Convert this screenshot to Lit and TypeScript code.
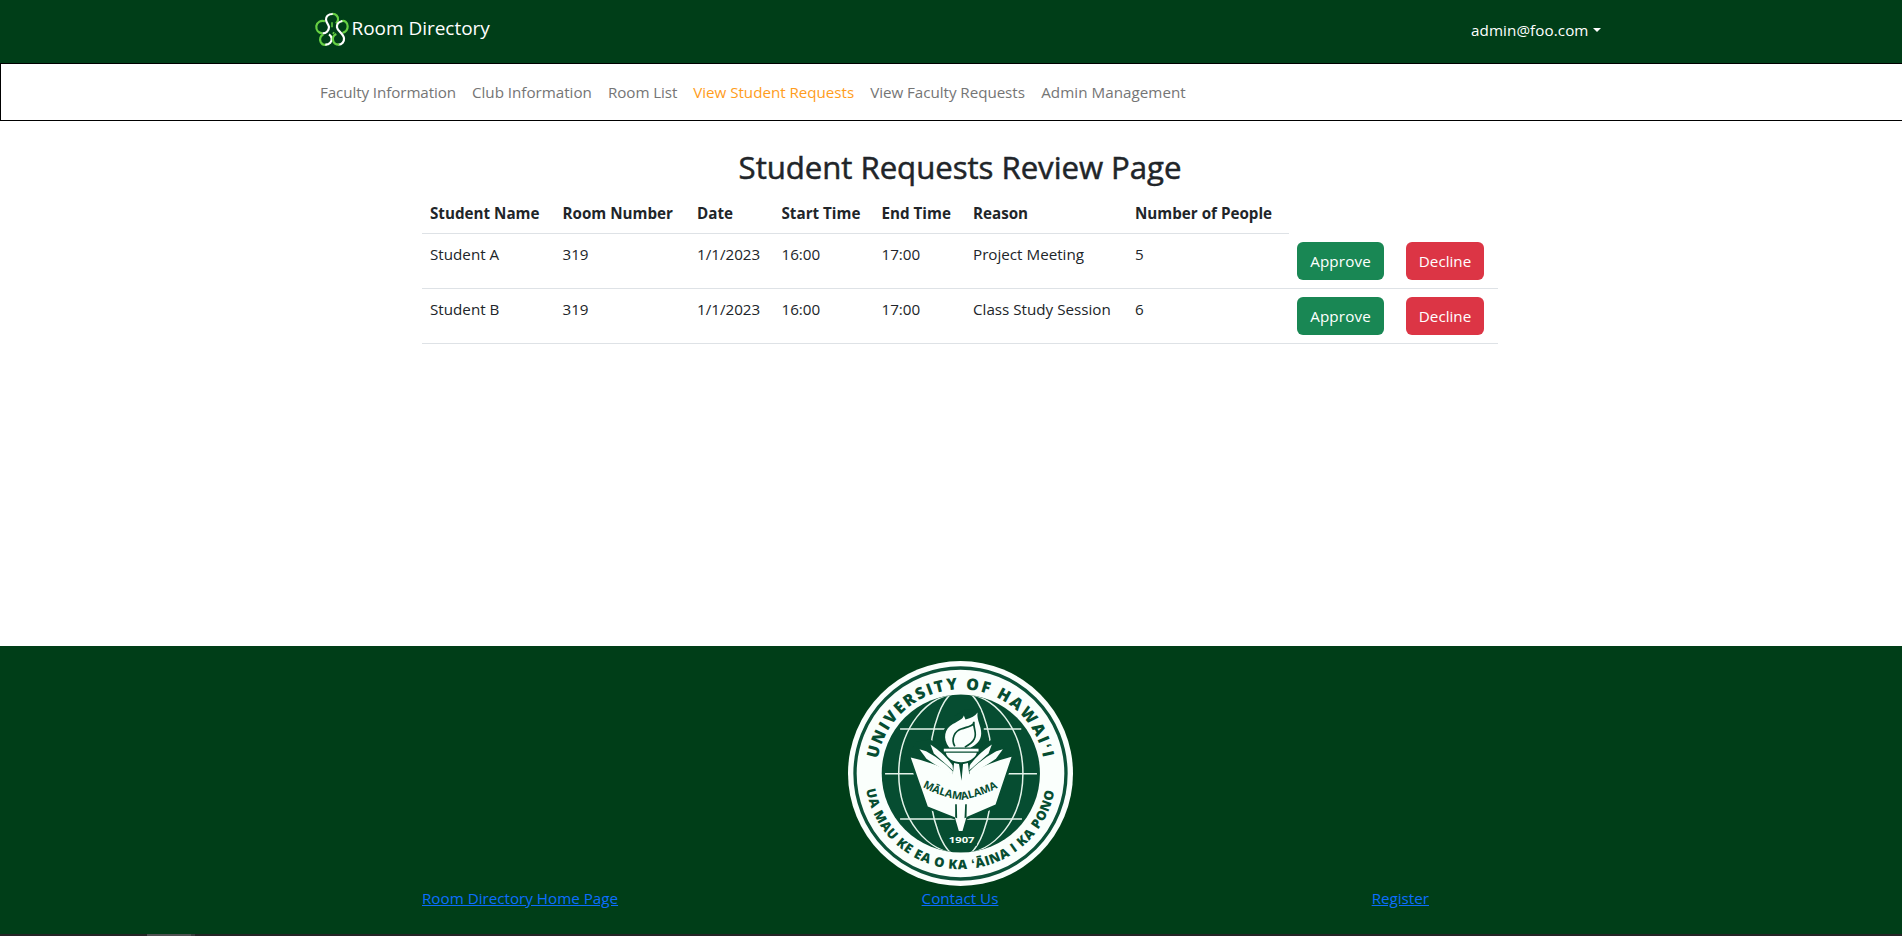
import { LitElement, html, css, svg } from "lit";
import { customElement } from "lit/decorators.js";
import { classMap } from "lit/directives/class-map.js";

const navItems = [
  { label: "Faculty Information", width: 136, spacing: -0.1 },
  { label: "Club Information", width: 120, spacing: -0.02 },
  { label: "Room List", width: 69.2, spacing: -0.09 },
  { label: "View Student Requests", width: 161, spacing: -0.03, active: true },
  { label: "View Faculty Requests", width: 155, spacing: -0.05 },
  { label: "Admin Management", width: 146, spacing: 0.04 },
];

const columns = ["Student Name", "Room Number", "Date", "Start Time", "End Time", "Reason", "Number of People"];

const requests = [
  ["Student A", "319", "1/1/2023", "16:00", "17:00", "Project Meeting", "5"],
  ["Student B", "319", "1/1/2023", "16:00", "17:00", "Class Study Session", "6"],
];

@customElement("clover-logo")
class CloverLogo extends LitElement {
  static styles = css`
    :host { display: block; width: 42px; height: 42px; }
    svg { display: block; fill: none; stroke-width: 6.6; }
    .g { stroke: #66d043; }
    .w { stroke: #fff; }
    .stem { stroke-width: 4.5; }
  `;
  render() {
    return html`<svg width="42" height="42" viewBox="0 0 126 126">
      <path class="g" d="M60 18C72 17 80 26 78 36Q77 42 72 46" />
      <path class="w" d="M62 18C48 18 41 26 42 36C43 44 50 50 51 57C51 68 42 77 31 76" />
      <path class="g" d="M39 40C27 35 15 43 13 54C12 66 19 75 31 76" />
      <path class="g" d="M34 80C25 83 22 93 26 102C30 110 37 112 44 110" />
      <path class="w" d="M40 110C53 110 60 101 59 91Q58 84 51 79" />
      <path class="g" d="M88 40C98 36 107 44 107 55C107 65 100 73 91 75" />
      <path class="w" d="M91 39C80 41 74 49 75 58C76 69 95 76 96 91C97 101 90 110 79 110" />
      <path class="g" d="M73 78C64 82 61 91 64 100C67 107 73 111 82 110" />
      <path class="g stem" d="M60 43V58M62 77L67 73" />
    </svg>`;
  }
}

@customElement("university-seal")
class UniversitySeal extends LitElement {
  static styles = css`
    :host { display: block; width: 225px; height: 225px; }
    svg { display: block; }
    text { font-family: "Open Sans", sans-serif; font-weight: 700; fill: #064d31; }
    .globe { fill: none; stroke: #e4f3ea; stroke-width: 4.5; }
    .white { fill: #fafffc; }
    .green { fill: #064d31; }
    .vein { fill: none; stroke: #064d31; stroke-width: 5; }
    .top { font-size: 48px; font-weight: 800; }
    .bottom { font-size: 39px; font-weight: 800; }
    .motto { font-size: 32px; }
    .year { font-size: 26px; fill: #f4fff8; }
  `;
  render() {
    const leaf = svg`
      <path class="white" d="M58 147L78 153Q120 175 158 213L158 224Q110 198 79 176Z" />
      <path class="white" d="M91 133Q132 160 157 195L159 211Q128 184 101 160Z" />`;
    return html`<svg width="225" height="225" viewBox="24 33 674 674">
      <defs>
        <path id="arc-top" d="M112.8 326.2A252 252 0 0 1 609.2 326.2" />
        <path id="arc-bottom" d="M78.5 418A286.5 286.5 0 0 0 643.5 418" />
        <path id="arc-motto" d="M67 260Q125 292 183 299Q245 290 304 256" />
        <clipPath id="disc"><circle cx="362" cy="370" r="236" /></clipPath>
      </defs>
      <circle class="white" cx="361" cy="370" r="337" />
      <circle cx="361" cy="370" r="316" fill="none" stroke="#0b5238" stroke-width="10" />
      <circle class="green" cx="362" cy="370" r="237" />
      <g class="globe" clip-path="url(#disc)">
        <ellipse cx="362" cy="370" rx="186" ry="240" />
        <ellipse cx="362" cy="370" rx="95" ry="250" />
        <path d="M180 237H320M430 237H543M135 371H590M180 506H545" />
      </g>
      <g transform="translate(180 150)">
        <path class="green" d="M50 125L90 118L128 140H240L275 118L320 150L345 165L290 322L200 358L191 392H172L164 358L78 325L20 165Z" />
        <path class="green" d="M128 145C114 90 150 50 196 28L240 26Q258 90 244 145Z" />
        <path class="white" d="M32 172Q110 189 158 222L162 186H203L207 222Q260 189 334 170L286 313L199 350L187 392H176L164 351L83 319Z" />
        ${leaf}
        <g transform="translate(366 0) scale(-1 1)">${leaf}</g>
        <path class="green" d="M176 188H189L184 242Z M165 312L170 312L171 354L165 352Z M195 312L200 312L199 352L193 354Z" />
        <path class="green" d="M128 141H238V158H232C228 178 205 192 183 192C158 192 138 178 134 158H128Z" />
        <path class="white" d="M131 146H235V154H131ZM137 158H230C225 176 204 186 183 186C160 186 141 176 137 158Z" />
        <path class="white" d="M147 142C126 115 134 86 158 72C176 61 188 57 191 46L196 58Q222 52 232 37C229 61 244 77 243 101C242 121 229 135 211 142Z" />
        <path class="vein" d="M164 139C151 116 164 92 185 86C209 79 222 76 221 65C219 88 232 99 222 117C217 128 203 136 194 141" />
        <text class="motto"><textPath href="#arc-motto" textLength="240" lengthAdjust="spacingAndGlyphs">MĀLAMALAMA</textPath></text>
      </g>
      <text class="top"><textPath href="#arc-top" textLength="700" lengthAdjust="spacing">UNIVERSITY OF HAWAIʻI</textPath></text>
      <text class="bottom"><textPath href="#arc-bottom" textLength="798" lengthAdjust="spacing">UA MAU KE EA O KA ʻĀINA I KA PONO</textPath></text>
      <path class="green" d="M318 552H410V586H318Z" />
      <text class="year" x="326" y="577" textLength="77" lengthAdjust="spacingAndGlyphs">1907</text>
    </svg>`;
  }
}

@customElement("app-root")
class AppRoot extends LitElement {
  static styles = css`
    :host {
      display: flex; flex-direction: column; height: 936px; overflow: hidden;
      box-sizing: border-box; background: #fff; color: #212529;
      font: 400 15.2px/24px "Open Sans", sans-serif;
    }
    * { box-sizing: border-box; }
    a { color: inherit; text-decoration: none; }
    .header { height: 63px; flex: none; background: #003e18; color: #fff; }
    .bar { width: 1296px; margin: 0 auto; display: flex; }
    .header .bar { padding: 8px 0 0 9px; align-items: flex-start; }
    .brand { display: flex; font-size: 19px; line-height: 30px; letter-spacing: -0.03px; }
    .brand span { padding-top: 5px; margin-left: -2.5px; }
    .user { margin: 10px -1.5px 0 auto; display: flex; align-items: center; letter-spacing: 0.08px; }
    .caret { margin-left: 4px; border: 4.6px solid transparent; border-top-color: #fff; border-bottom: 0; }
    .nav { height: 58px; flex: none; border: 1px solid #000; border-right: 0; }
    .nav .bar { padding: 16px 0 0 16.5px; gap: 16px; color: #757575; }
    .nav a { white-space: nowrap; }
    .nav a.active { color: #ff9d1c; }
    /* Content is centred on a 1920px canvas, slightly wider than the window. */
    .main, .footer { width: 1920px; }
    .main { flex: 1; padding: 27px 422px 0; }
    h2 { margin: 0 0 7px; text-align: center; font-weight: 500; font-size: 31.2px; line-height: 38.4px; letter-spacing: -0.05px; -webkit-text-stroke: 0.5px #212529; }
    table { border-collapse: separate; border-spacing: 0; table-layout: fixed; width: 1076px; }
    th, td { padding: 8px; text-align: left; vertical-align: top; border-bottom: 1px solid #dee2e6; white-space: nowrap; }
    th { font-weight: 700; }
    .c0 { width: 132.5px; } .c1 { width: 134.5px; } .c2 { width: 84.5px; } .c3 { width: 100px; }
    .c4 { width: 91.5px; } .c5 { width: 162px; } .c6 { width: 162px; }
    .c7 { width: 109px; } .c8 { width: 100px; }
    th.blank { border: 0; }
    button { display: block; height: 38px; padding: 0; border: 0; border-radius: 6px; color: #fff; font: inherit; }
    .approve { width: 87px; background: #198754; letter-spacing: 0.15px; }
    .decline { width: 78px; background: #dc3545; }
    .footer { height: 288px; flex: none; background: #003e18; padding: 15px 422px 0; }
    university-seal { margin: 0 auto; }
    .links { display: grid; grid-template-columns: 1fr auto 1fr; color: #0d6efd; }
    .links a { text-decoration: underline; }
    .links a:last-child { justify-self: end; margin-right: 69px; }
    .strip { height: 2px; flex: none; background: #252526; padding-left: 147px; display: flex; }
    .thumb { width: 48px; height: 2px; background: #505052; border-right: 4px solid #3a3a3c; }
  `;
  render() {
    return html`
      <header class="header"><div class="bar">
        <a class="brand"><clover-logo></clover-logo><span>Room Directory</span></a>
        <a class="user">admin@foo.com<i class="caret"></i></a>
      </div></header>
      <nav class="nav"><div class="bar">
        ${navItems.map((n) => html`<a class=${classMap({ active: !!n.active })} style="width:${n.width}px;letter-spacing:${n.spacing}px">${n.label}</a>`)}
      </div></nav>
      <main class="main">
        <h2>Student Requests Review Page</h2>
        <table>
          <thead><tr>
            ${columns.map((c, i) => html`<th class="c${i}">${c}</th>`)}
            <th class="c7 blank"></th><th class="c8 blank"></th>
          </tr></thead>
          <tbody>
            ${requests.map((r) => html`<tr>
              ${r.map((v) => html`<td>${v}</td>`)}
              <td><button class="approve">Approve</button></td>
              <td><button class="decline">Decline</button></td>
            </tr>`)}
          </tbody>
        </table>
      </main>
      <footer class="footer">
        <university-seal></university-seal>
        <div class="links"><a>Room Directory Home Page</a><a>Contact Us</a><a>Register</a></div>
      </footer>
      <div class="strip"><div class="thumb"></div></div>
    `;
  }
}
